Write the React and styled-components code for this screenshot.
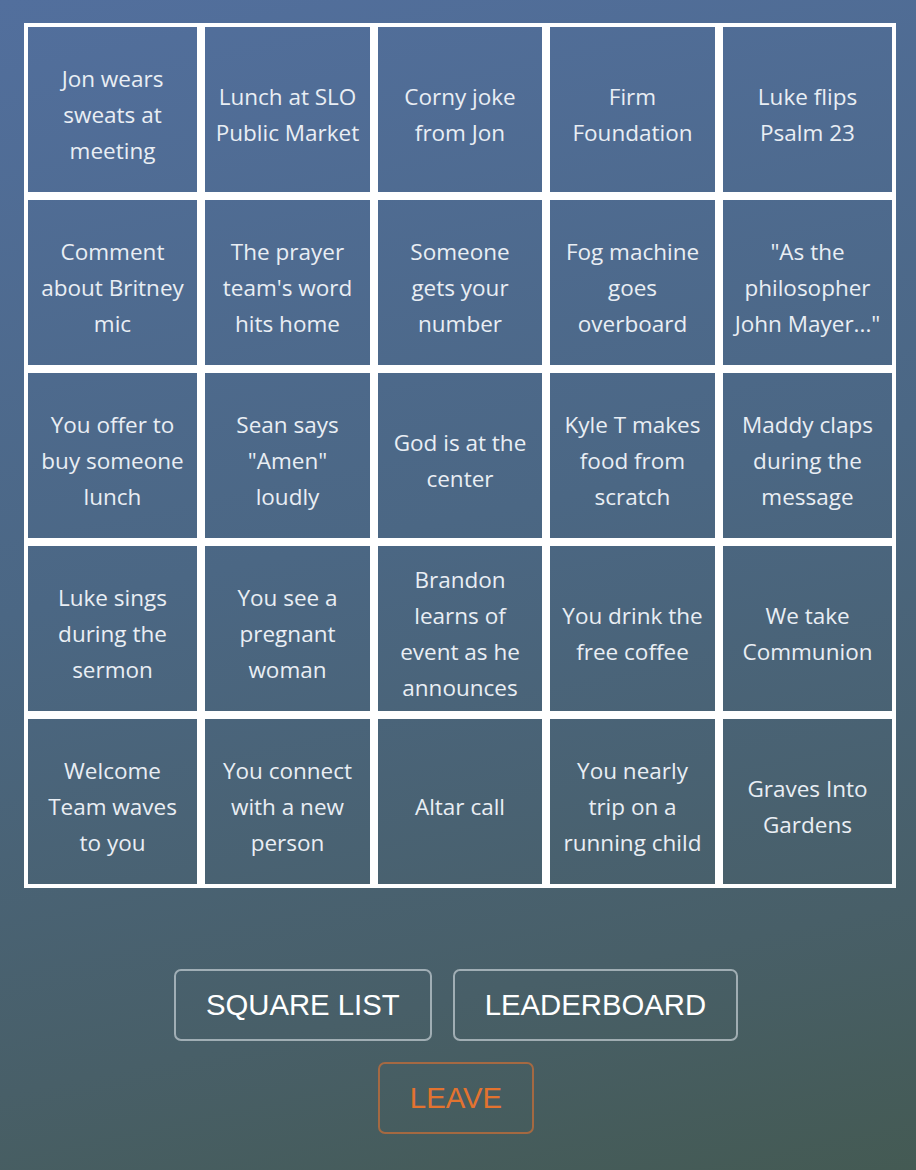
import styled, { createGlobalStyle } from 'styled-components';

const GlobalStyle = createGlobalStyle`
  html, body {
    margin: 0;
    padding: 0;
  }
  body {
    min-height: 1170px;
    background: linear-gradient(168deg, #526f9d 0%, #4b6784 45%, #485f68 80%, #445a53 100%);
    font-family: 'Segoe UI', 'Open Sans', sans-serif;
  }
`;

const Page = styled.div`
  padding: 23px 20px 40px 24px;
  display: flex;
  flex-direction: column;
`;

const Board = styled.div`
  display: grid;
  grid-template-columns: 177px 173px 172px 173px 177px;
  grid-auto-rows: 173px;
  width: 872px;
`;

const Square = styled.div`
  border: 4px solid #ffffff;
  display: flex;
  align-items: center;
  justify-content: center;
  text-align: center;
  padding: 10px 0 0;
  color: #e9eef4;
  font-family: 'Open Sans', 'Noto Sans', sans-serif;
  font-size: 22.5px;
  line-height: 36px;
  white-space: pre-line;
`;

const Actions = styled.div`
  margin-top: 81px;
  margin-right: 8px;
  display: flex;
  flex-direction: column;
  align-items: center;
  gap: 21px;
`;

const ButtonRow = styled.div`
  display: flex;
  justify-content: center;
  gap: 21px;
`;

const Button = styled.button`
  height: 72px;
  padding: 0 30px;
  background: transparent;
  border: 2px solid
    ${(props) => (props.$danger ? 'rgba(196, 110, 56, 0.75)' : 'rgba(220, 226, 232, 0.6)')};
  border-radius: 7px;
  color: ${(props) => (props.$danger ? '#e3732f' : '#ffffff')};
  font-family: 'Liberation Sans', Arial, sans-serif;
  font-size: 29.3px;
  text-transform: uppercase;
  cursor: pointer;
`;

const squares = [
  'Jon wears\nsweats at\nmeeting',
  'Lunch at SLO\nPublic Market',
  'Corny joke\nfrom Jon',
  'Firm\nFoundation',
  'Luke flips\nPsalm 23',
  'Comment\nabout Britney\nmic',
  "The prayer\nteam's word\nhits home",
  'Someone\ngets your\nnumber',
  'Fog machine\ngoes\noverboard',
  '"As the\nphilosopher\nJohn Mayer..."',
  'You offer to\nbuy someone\nlunch',
  'Sean says\n"Amen"\nloudly',
  'God is at the\ncenter',
  'Kyle T makes\nfood from\nscratch',
  'Maddy claps\nduring the\nmessage',
  'Luke sings\nduring the\nsermon',
  'You see a\npregnant\nwoman',
  'Brandon\nlearns of\nevent as he\nannounces',
  'You drink the\nfree coffee',
  'We take\nCommunion',
  'Welcome\nTeam waves\nto you',
  'You connect\nwith a new\nperson',
  'Altar call',
  'You nearly\ntrip on a\nrunning child',
  'Graves Into\nGardens',
];

const App = () => {
  return (
    <Page>
      <GlobalStyle />
      <Board>
        {squares.map((text) => (
          <Square key={text}>{text}</Square>
        ))}
      </Board>
      <Actions>
        <ButtonRow>
          <Button>Square List</Button>
          <Button>Leaderboard</Button>
        </ButtonRow>
        <Button $danger>Leave</Button>
      </Actions>
    </Page>
  );
};

export default App;
